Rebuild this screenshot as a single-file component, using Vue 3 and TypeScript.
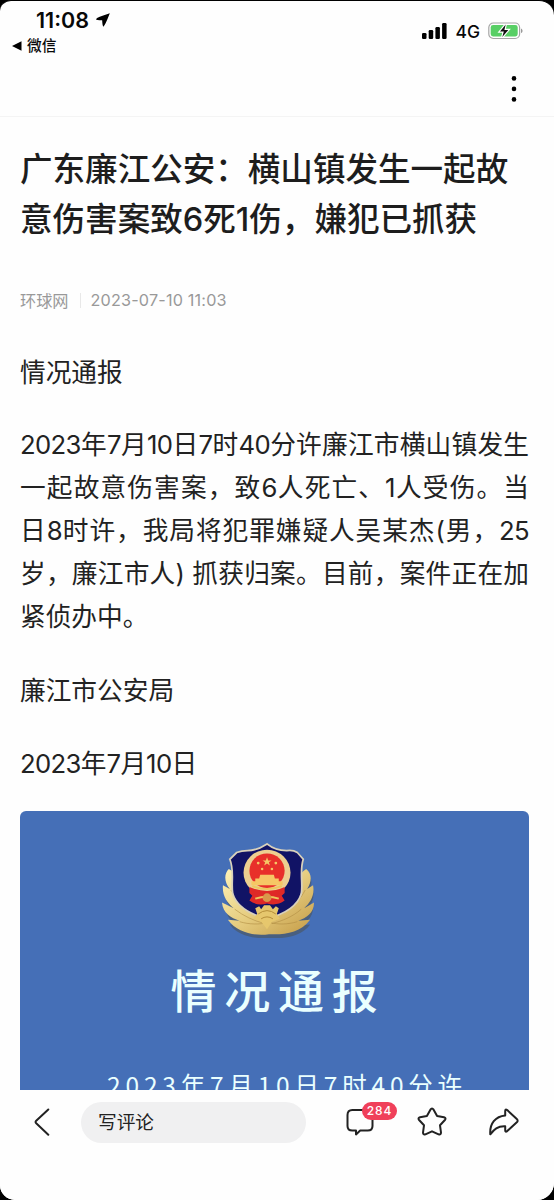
<script setup lang="ts">
interface BodyLine {
  text: string
  fill: boolean
}

const titleLines: string[] = ['广东廉江公安：横山镇发生一起故', '意伤害案致6死1伤，嫌犯已抓获']

const paragraphs: BodyLine[][] = [
  [{ text: '情况通报', fill: false }],
  [
    { text: '2023年7月10日7时40分许廉江市横山镇发生', fill: true },
    { text: '一起故意伤害案，致6人死亡、1人受伤。当', fill: true },
    { text: '日8时许，我局将犯罪嫌疑人吴某杰(男，25', fill: true },
    { text: '岁，廉江市人) 抓获归案。目前，案件正在加', fill: true },
    { text: '紧侦办中。', fill: false },
  ],
  [{ text: '廉江市公安局', fill: false }],
  [{ text: '2023年7月10日', fill: false }],
]

// Splits a line into runs of digits and runs of everything else.
const runs = (text: string): string[] => text.match(/\d+|\D+/g) ?? []
const isNumber = (run: string): boolean => /^\d/.test(run)

const commentCount = 284
</script>

<template>
  <div class="screen">
    <header class="top">
      <div class="status">
        <div class="status-left">
          <div class="clock">
            <span>11:08</span>
            <svg width="14" height="14" viewBox="0 0 15 15"><path d="M14.8.4Q.6 5 0 6.6q.2.9 6.600 1.100.3 6.400 1.300 6.900Q9.600 14 14.800.4z" /></svg>
          </div>
          <div class="back-app">
            <svg width="10" height="10" viewBox="0 0 10 10"><path d="M0 5 9.5.3v9.4z" /></svg>
            <span>微信</span>
          </div>
        </div>
        <div class="status-right">
          <svg width="25" height="16" viewBox="0 0 25 16">
            <rect x="0" y="10" width="4.5" height="6" rx="1.3" />
            <rect x="6.7" y="7" width="4.5" height="9" rx="1.3" />
            <rect x="13.4" y="4" width="4.5" height="12" rx="1.3" />
            <rect x="20.1" y="0" width="4.5" height="16" rx="1.3" />
          </svg>
          <span class="network">4G</span>
          <svg width="36" height="18" viewBox="0 0 36 18">
            <rect x=".8" y="1" width="30.8" height="15.5" rx="4.5" fill="#fff" stroke="#a5a5a5" stroke-width="1.2" />
            <rect x="2.7" y="3" width="27" height="11.5" rx="2.4" fill="#58cf65" />
            <path d="M33 6.4c2 .8 2 3.9 0 4.7z" fill="#999" />
            <path d="M17.700 2.500 12 9.600h3.800L14.300 15l6-7.100h-3.900z" fill="#111" stroke="#fff" stroke-width="2.4" paint-order="stroke" />
          </svg>
        </div>
      </div>
      <div class="toolbar">
        <svg width="6" height="28" viewBox="0 0 6 28">
          <circle cx="3" cy="3.4" r="2.3" />
          <circle cx="3" cy="13.9" r="2.3" />
          <circle cx="3" cy="24.4" r="2.3" />
        </svg>
      </div>
    </header>

    <main class="article">
      <h1><span v-for="line in titleLines" :key="line">{{ line }}</span></h1>
      <div class="meta">
        <span>环球网</span>
        <i></i>
        <span class="date">2023-07-10 11:03</span>
      </div>
      <p v-for="(lines, index) in paragraphs" :key="index">
        <span v-for="line in lines" :key="line.text" class="line" :class="{ fill: line.fill }"><span v-for="(run, i) in runs(line.text)" :key="i" :class="{ number: isNumber(run) }">{{ run }}</span></span>
      </p>
      <section class="notice">
        <svg class="emblem" width="94" height="96" viewBox="0 0 96 100" preserveAspectRatio="none">
          <defs>
            <linearGradient id="gold" x1="0" y1="0" x2="1" y2="1">
              <stop offset="0" stop-color="#fff3b8" />
              <stop offset=".5" stop-color="#e6cd80" />
              <stop offset="1" stop-color="#c39a45" />
            </linearGradient>
          </defs>
          <path d="M49 98C35 99 17 97 8 84l11 1C11 82 4 77 4 66l10 5C7 65 2 59 4 48l5 3C3 43 5 35 9 30c5 6 12 18 18 29 7 10 16 16 22 17 6-1 15-7 22-17 6-11 10-23 16-29 5 5 6 12 1 21l5-3c2 11-3 17-9 23l9-5c0 11-7 16-14 19l11-1c-9 13-27 15-41 14z" fill="#4b5661" transform="translate(1 2)" opacity=".65" />
          <path d="M49 96C35 98 17 95 7 81l12 1C10 79 2 74 1 63l12 6C6 63 1 56 2 45l7 4C3 41 3 33 8 28c9 5 14 15 20 28 7 10 15 16 21 17 6-1 14-7 21-17 6-13 9-23 17-28 6 5 6 13 1 21l6-4c2 11-3 18-9 24l10-6c0 11-8 16-16 19l12-1c-10 14-28 16-42 15z" fill="url(#gold)" />
          <g fill="none" stroke="#b08b41" stroke-width="1" opacity=".6">
            <path d="M10 50c7 10 14 19 28 26M14 70c9 7 19 12 31 15M19 83c10 3 20 3 29 1M86 50c-5 10-13 19-26 26M82 70c-9 8-19 12-30 15M78 83c-10 3-19 3-28 1" />
          </g>
          <path d="M47 2c6 5 13 7 20 7 5-1 8 0 11 2l6 7c-4 12 0 26-2 36-4 13-16 21-35 26C28 75 16 67 12 54c-2-11 2-24-3-36l7-7c5-2 7-2 11-2 8 0 14-3 20-7z" fill="#111365" stroke="#d9d1bb" stroke-width="1.800" />
          <circle cx="47" cy="32" r="24" fill="#edcf90" />
          <circle cx="47" cy="30" r="18" fill="#e8302a" />
          <g fill="#f6c765">
            <path d="m47 16 1.2 3.2h3.4l-2.7 2 1 3.3-2.9-2-2.9 2 1-3.3-2.7-2h3.4z" />
            <circle cx="38" cy="22" r="1.4" /><circle cx="56" cy="22" r="1.4" />
            <circle cx="42" cy="28" r="1.3" /><circle cx="52" cy="28" r="1.3" />
            <path d="M40 34h14l1 4h4v3h4v4H31v-4h4v-3h4z" />
          </g>
          <path d="M29 47q18 8 36 0v6l-3 3 3 5q-8 6-18 3-10 3-18-3l3-5-3-3z" fill="#df2927" />
          <path d="M32 46q15 6 30 0M35 59q12-4 24 0" fill="none" stroke="#edc65c" stroke-width="2" />
          <circle cx="47" cy="58" r="4.500" fill="#d9974a" />
          <path d="m35 69 4-2 2 3 3-4h6l3 4 3-3 3 2-2 6 3 5-8 3-5 8-6-8-8-3 4-5z" fill="#e6c76d" />
          <path d="M38 75q9-7 18 0M41 80q6-4 12 0" fill="none" stroke="#b38b38" />
        </svg>
        <h2>情况通报</h2>
        <div class="notice-text">2023年7月10日7时40分许</div>
      </section>
    </main>

    <footer class="bottom">
      <svg class="chevron" width="18" height="28" viewBox="0 0 18 28"><path d="M15.3 1.5 3.2 12.8q-1.3 1.2 0 2.4l12.1 11.5" /></svg>
      <div class="comment-box">写评论</div>
      <div class="comments">
        <svg width="28" height="28" viewBox="0 0 28 28"><path d="M6.3 2h15.4Q26.500 2 26.500 7v11q0 4.500-4.800 4.500h-7.500l-4.200 3.900V22.500H6.300Q1.500 22.500 1.500 18V7q0-5 4.800-5z" /></svg>
        <span class="badge">{{ commentCount }}</span>
      </div>
      <svg class="star" width="30" height="30" viewBox="0 0 30 30"><path d="M13.4 2.700q1.600-2.200 3.200 0l3.500 6.300 6.900 1.300q2.500.8.900 2.700l-4.900 5.300 1 7.300q0 2.500-2.400 1.700L15 24.300l-6.600 3q-2.400.8-2.400-1.700l1-7.300L2.100 13q-1.600-1.900.9-2.700L9.900 9z" /></svg>
      <svg class="share" width="32" height="30" viewBox="0 0 32 30"><path d="M17.200 4q0-2.400 2-.9l9.600 9q1.700 1.600 0 3.200l-9.600 8.800q-2 1.500-2-.9v-3.900C9.600 18.900 6 22.500 2.300 27.300 1.400 16.800 7.500 9.200 17.200 8.400z" /></svg>
    </footer>
  </div>
</template>

<style>
body {
  background: #000;
}
</style>

<style scoped>
.screen {
  width: 554px;
  height: 1200px;
  box-sizing: border-box;
  border-top: 1px solid #000;
  display: flex;
  flex-direction: column;
  background: #fefefe;
  border-radius: 11px 15px 17px 15px;
  overflow: hidden;
  color: #222;
  font-family: Inter, "Noto Sans CJK SC", sans-serif;
}
svg {
  display: block;
  flex: none;
}
.top {
  height: 116px;
  box-sizing: border-box;
  border-bottom: 1px solid #f4f4f4;
  color: #080808;
}
.status {
  height: 60px;
  display: flex;
  justify-content: space-between;
}
.clock {
  display: flex;
  align-items: center;
  gap: 7px;
  height: 28px;
  padding: 5px 0 0 36px;
  font-size: 21.5px;
  font-weight: 600;
}
.back-app {
  display: flex;
  align-items: center;
  gap: 5px;
  height: 23px;
  padding-left: 12px;
  font-size: 14.7px;
  font-weight: 500;
}
.back-app span {
  position: relative;
  top: -1px;
}
.status-right {
  display: flex;
  align-items: center;
  height: 18px;
  padding: 21px 30px 0 0;
}
.network {
  margin: 0 8px 0 8px;
  font-size: 17.5px;
  font-weight: 500;
}
.toolbar {
  display: flex;
  justify-content: flex-end;
  padding: 14px 37px 0 0;
}
.article {
  flex: 1;
  min-height: 0;
  overflow: hidden;
  padding: 27px 25px 0 20px;
}
h1 {
  margin: 0;
  font-size: 32.55px;
  line-height: 50px;
  font-weight: 500;
  color: #1d1d1d;
}
h1 span,
.line {
  display: block;
  white-space: nowrap;
}
.meta {
  display: flex;
  align-items: center;
  height: 24px;
  margin-top: 44px;
  font-size: 16.2px;
  color: #999;
}
.meta i {
  width: 1px;
  height: 15px;
  margin: 0 10px 0 11px;
  background: #e8e8e8;
}
.date {
  letter-spacing: 0.18px;
}
p {
  margin: 0 0 30px;
  font-size: 25.7px;
  line-height: 43.1px;
}
.meta + p {
  margin-top: 39px;
  margin-bottom: 29px;
}
.number {
  letter-spacing: -0.65px;
}
.fill {
  text-align: justify;
  text-align-last: justify;
}
.notice {
  height: 300px;
  margin-top: -4px;
  border-radius: 6px 6px 0 0;
  background: #456fb7;
  color: #eaffff;
  font-family: "Noto Sans CJK SC", sans-serif;
  display: flex;
  flex-direction: column;
  align-items: center;
}
.emblem {
  margin: 31px 0 0 -13px;
}
h2 {
  margin: 19px 0 0 7px;
  font-size: 46px;
  line-height: 62px;
  letter-spacing: 7.8px;
  font-weight: 500;
}
.notice-text {
  margin: 48px 0 0 25px;
  font-size: 24.5px;
  line-height: 36px;
  letter-spacing: 4.8px;
  white-space: nowrap;
}
.bottom {
  height: 110px;
  flex: none;
  display: flex;
  align-items: flex-start;
  background: #fefefe;
}
.bottom svg {
  fill: none;
  stroke: #222;
  stroke-width: 2;
  stroke-linecap: round;
  stroke-linejoin: round;
}
.chevron {
  margin: 18px 0 0 33px;
}
.comment-box {
  width: 225px;
  height: 41px;
  box-sizing: border-box;
  margin: 12px 0 0 30px;
  padding-left: 17px;
  border-radius: 21px;
  background: #f0f0f1;
  font-size: 18.7px;
  line-height: 41px;
}
.comments {
  position: relative;
  margin: 18px 0 0 40px;
}
.badge {
  position: absolute;
  left: 16px;
  top: -6px;
  width: 35px;
  height: 18px;
  border-radius: 9px;
  background: #f0405a;
  color: #fff;
  font-size: 12px;
  line-height: 18px;
  letter-spacing: 0.9px;
  text-align: center;
  font-weight: 500;
}
.star {
  margin: 17px 0 0 43px;
}
.share {
  margin: 17px 0 0 41px;
}
</style>
